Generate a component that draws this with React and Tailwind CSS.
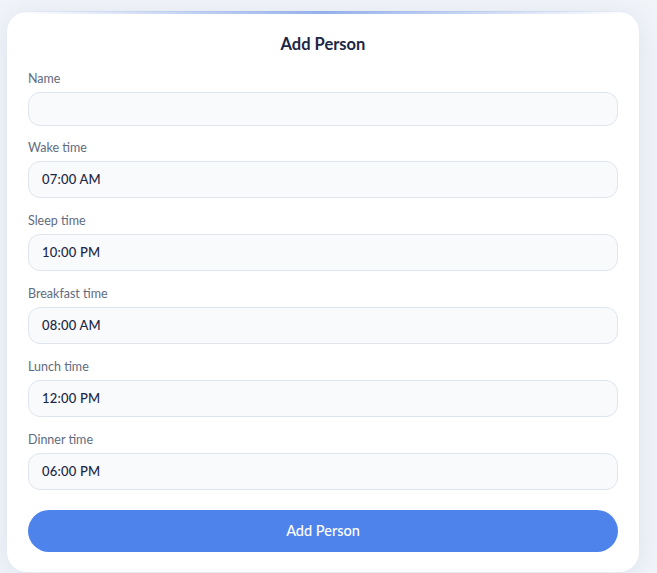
import React from "react";

const fields = [
  { label: "Name", value: "", h: "h-[34px]" },
  { label: "Wake time", value: "07:00 AM", h: "h-[37px]" },
  { label: "Sleep time", value: "10:00 PM", h: "h-[37px]" },
  { label: "Breakfast time", value: "08:00 AM", h: "h-[37px]" },
  { label: "Lunch time", value: "12:00 PM", h: "h-[37px]" },
  { label: "Dinner time", value: "06:00 PM", h: "h-[37px]" },
];

export default function App() {
  return (
    <div
      className="min-h-screen bg-[#f1f4f9] pl-[7px] pt-[12px]"
      style={{ fontFamily: "Lato, 'Noto Sans', sans-serif" }}
    >
      <div className="relative w-[632px] rounded-[20px] bg-white px-[21px] pt-[20px] pb-[20px] shadow-[0_4px_28px_rgba(100,116,160,0.14)]">
        <div className="absolute left-[10px] right-[10px] top-[-1px] h-[3px] bg-gradient-to-r from-transparent via-[#7c9de6] to-transparent opacity-80" />
        <h1 className="text-center text-[16.5px] leading-[24px] font-bold text-[#1b2745]">
          Add Person
        </h1>
        <div className="mt-[13px] flex flex-col gap-[13px]">
          {fields.map((f, i) => (
            <div key={f.label} className={i === 1 ? "-mt-px" : ""}>
              <label className="block text-[12.5px] leading-[20px] text-[#5f6b80]">
                {f.label}
              </label>
              <div
                className={`mt-[3px] flex ${f.h} items-center rounded-[12px] border border-[#dfe5ee] bg-[#f8fafc] px-[13px] text-[13px] font-medium tracking-[0.2px] text-[#1b2745]`}
              >
                {f.value}
              </div>
            </div>
          ))}
        </div>
        <button className="mt-[20px] flex h-[42px] w-full items-center justify-center rounded-full bg-[#4f83ec] text-[14.5px] font-medium text-white">
          Add Person
        </button>
      </div>
    </div>
  );
}
